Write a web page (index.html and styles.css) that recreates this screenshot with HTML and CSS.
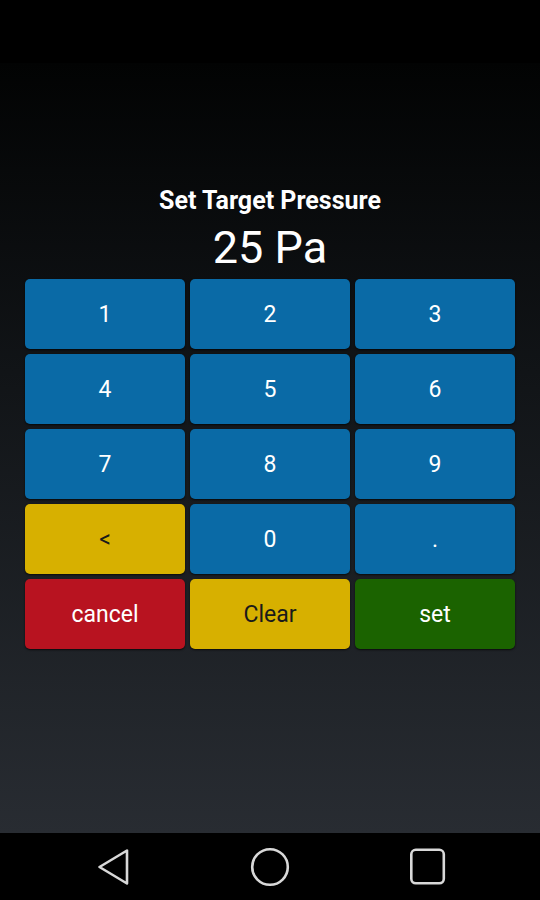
FILE: index.html
```html
<!DOCTYPE html>
<html>
<head>
<meta charset="utf-8">
<link rel="stylesheet" href="styles.css">
</head>
<body>
<div class="screen">
  <div class="statusbar"></div>
  <main class="app">
    <div class="title">Set Target Pressure</div>
    <div class="value">25 Pa</div>
    <div class="pad">
      <div class="key blue">1</div>
      <div class="key blue">2</div>
      <div class="key blue">3</div>
      <div class="key blue">4</div>
      <div class="key blue">5</div>
      <div class="key blue">6</div>
      <div class="key blue">7</div>
      <div class="key blue">8</div>
      <div class="key blue">9</div>
      <div class="key yellow">&lt;</div>
      <div class="key blue">0</div>
      <div class="key blue">.</div>
      <div class="key red">cancel</div>
      <div class="key yellow">Clear</div>
      <div class="key green">set</div>
    </div>
  </main>
  <nav class="navbar">
    <svg class="navicon" width="48" height="48" viewBox="0 0 48 48"><path d="M10.5 24 L38 7.5 L38 40.5 Z" fill="none" stroke="#d8d8d8" stroke-width="2.6" stroke-linejoin="round"/></svg>
    <svg class="navicon" width="48" height="48" viewBox="0 0 48 48"><circle cx="24" cy="24" r="17.8" fill="none" stroke="#d8d8d8" stroke-width="2.6"/></svg>
    <svg class="navicon" width="48" height="48" viewBox="0 0 48 48"><rect x="8.3" y="6.8" width="32.5" height="33.5" rx="4.5" fill="none" stroke="#d8d8d8" stroke-width="2.6"/></svg>
  </nav>
</div>
</body>
</html>
```
FILE: styles.css
```css
html, body {
  margin: 0;
  padding: 0;
  background: #000;
}
.screen {
  width: 540px;
  height: 900px;
  display: flex;
  flex-direction: column;
  font-family: Roboto, "Noto Sans", sans-serif;
  color: #fff;
}
.statusbar {
  height: 63px;
  background: #000;
  flex: none;
}
.app {
  flex: 1;
  background: linear-gradient(#020303 0%, #111417 40%, #282c32 100%);
  display: flex;
  flex-direction: column;
  align-items: center;
  padding-top: 123px;
  box-sizing: border-box;
}
.title {
  font-size: 25px;
  font-weight: 700;
  line-height: 30px;
}
.value {
  margin-top: 6px;
  font-size: 45px;
  line-height: 52px;
}
.pad {
  margin-top: 5px;
  width: 490px;
  display: grid;
  grid-template-columns: repeat(3, 1fr);
  grid-auto-rows: 70px;
  gap: 5px;
}
.key {
  border-radius: 5px;
  display: flex;
  align-items: center;
  justify-content: center;
  font-size: 23px;
  box-shadow: 0 1px 2px rgba(0,0,0,0.7);
}
.blue { background: #0a6aa6; color: #fff; }
.yellow { background: #d7b000; color: #1a1a1a; }
.red { background: #b81320; color: #fff; }
.green { background: #1b6300; color: #fff; }
.navbar {
  height: 67px;
  flex: none;
  background: #000;
  display: flex;
  align-items: center;
  justify-content: center;
  gap: 109px;
}
.navicon { display: block; }
```
